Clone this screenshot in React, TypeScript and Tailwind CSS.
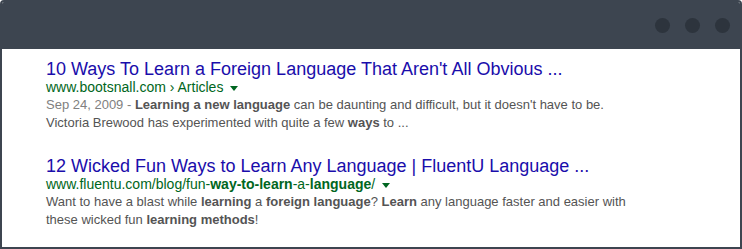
const titleCls = "block text-[18px] leading-[20px] text-[#1a0dab] whitespace-nowrap";
const urlCls = "flex items-center text-[14px] leading-[17px] text-[#006621] whitespace-nowrap";
const snippetCls = "text-[13px] leading-[18px] text-[#545454]";

function Caret() {
  return (
    <span className="ml-[7px] mt-[1px] inline-block h-0 w-0 border-x-[4px] border-t-[5px] border-x-transparent border-t-[#006621]" />
  );
}

export default function App() {
  return (
    <div
      className="w-[742px] h-[249px] bg-white border-2 border-[#3d4550] rounded-t-[4px] overflow-hidden"
      style={{ fontFamily: '"Liberation Sans", Arial, sans-serif' }}
    >
      <div className="h-[47px] bg-[#3d4550] flex items-center justify-end gap-[15px] pr-[10px]">
        <span className="w-[15px] h-[15px] rounded-full bg-[#2d343d]" />
        <span className="w-[15px] h-[15px] rounded-full bg-[#2d343d]" />
        <span className="w-[15px] h-[15px] rounded-full bg-[#2d343d]" />
      </div>

      <div className="pl-[44px] pt-[10px] flex flex-col gap-[24px]">
        <div>
          <a className={titleCls}>10 Ways To Learn a Foreign Language That Aren't All Obvious ...</a>
          <div className={urlCls}>
            <span>www.bootsnall.com › Articles</span>
            <Caret />
          </div>
          <p className={snippetCls}>
            <span className="text-[#808080]">Sep 24, 2009 - </span>
            <b>Learning a new language</b> can be daunting and difficult, but it doesn't have to be.
            <br />
            Victoria Brewood has experimented with quite a few <b>ways</b> to ...
          </p>
        </div>

        <div>
          <a className={titleCls}>12 Wicked Fun Ways to Learn Any Language | FluentU Language ...</a>
          <div className={urlCls}>
            <span>
              www.fluentu.com/blog/fun-<b>way-to-learn</b>-a-<b>language</b>/
            </span>
            <Caret />
          </div>
          <p className={snippetCls}>
            Want to have a blast while <b>learning</b> a <b>foreign language</b>? <b>Learn</b> any language faster and easier with
            <br />
            these wicked fun <b>learning methods</b>!
          </p>
        </div>
      </div>
    </div>
  );
}
